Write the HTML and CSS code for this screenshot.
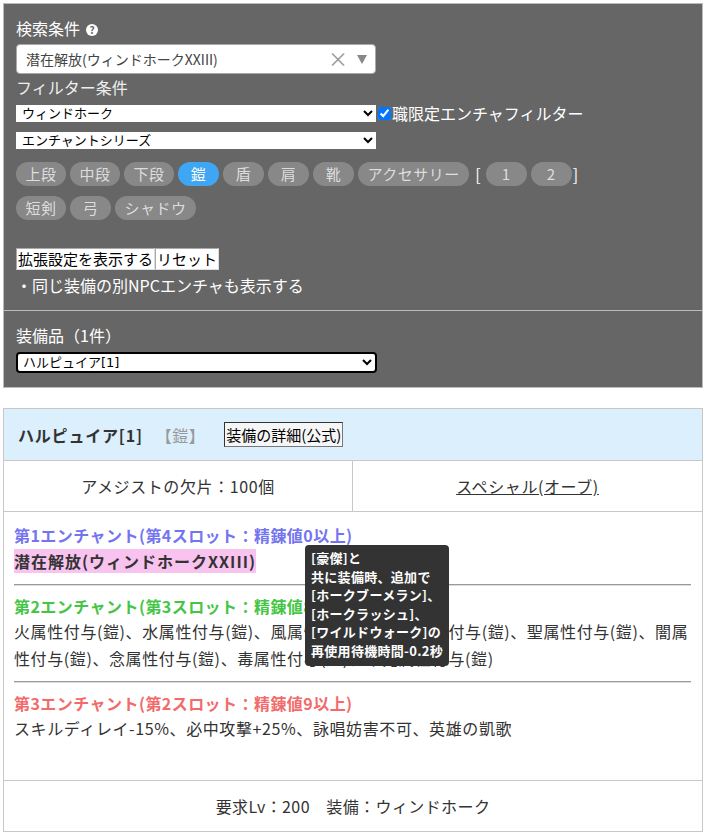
FILE: index.html
```html
<!DOCTYPE html>
<html lang="ja">
<head>
    <meta charset="UTF-8">
    <meta name="viewport" content="width=device-width, initial-scale=1.0">
    <title>エンチャント検索</title>
    <link rel="stylesheet" href="styles.css">
</head>
<body>

<div class="page">

    <!-- Search conditions -->
    <section class="search-panel">
        <div class="search-top">
            <div class="panel-title">検索条件 <span class="help-icon">?</span></div>

            <div class="combo">
                <span class="combo-value">潜在解放(ウィンドホークXXIII)</span>
                <span class="combo-clear">×</span>
                <span class="combo-arrow"></span>
            </div>

            <div class="panel-title panel-title-sub">フィルター条件</div>

            <div class="filter-row">
                <select class="filter-select">
                    <option>ウィンドホーク</option>
                </select>
                <label class="job-filter"><input type="checkbox" checked>職限定エンチャフィルター</label>
            </div>

            <div class="filter-row filter-row-2">
                <select class="filter-select">
                    <option>エンチャントシリーズ</option>
                </select>
            </div>

            <div class="tag-row">
                <span class="tag">上段</span>
                <span class="tag">中段</span>
                <span class="tag">下段</span>
                <span class="tag tag-active">鎧</span>
                <span class="tag">盾</span>
                <span class="tag">肩</span>
                <span class="tag">靴</span>
                <span class="tag">アクセサリー</span>
                <span class="tag-bracket">[</span>
                <span class="tag">1</span>
                <span class="tag">2</span>
                <span class="tag-bracket tag-bracket-end">]</span>
            </div>
            <div class="tag-row">
                <span class="tag">短剣</span>
                <span class="tag">弓</span>
                <span class="tag">シャドウ</span>
            </div>

            <div class="action-row">
                <button class="plain-btn">拡張設定を表示する</button><button class="plain-btn">リセット</button>
            </div>
            <div class="option-line">・同じ装備の別NPCエンチャも表示する</div>
        </div>

        <div class="search-bottom">
            <div class="panel-title">装備品（1件）</div>
            <select class="equip-select">
                <option>ハルピュイア[1]</option>
            </select>
        </div>
    </section>

    <!-- Equipment card -->
    <section class="equip-card">
        <header class="card-head">
            <span class="equip-name">ハルピュイア[1]</span>
            <span class="equip-type">【鎧】</span>
            <button class="detail-btn">装備の詳細(公式)</button>
        </header>

        <div class="card-info">
            <div class="info-cell">アメジストの欠片：100個</div>
            <div class="info-cell"><a href="#">スペシャル(オーブ)</a></div>
        </div>

        <div class="card-body">
            <div class="slot-title slot-1">第1エンチャント(第4スロット：精錬値0以上)</div>
            <div class="slot-effect"><span class="effect-hit">潜在解放(ウィンドホークXXIII)</span></div>

            <hr class="slot-rule">

            <div class="slot-title slot-2">第2エンチャント(第3スロット：精錬値8以上)</div>
            <div class="slot-effect">火属性付与(鎧)、水属性付与(鎧)、風属性付与(鎧)、地属性付与(鎧)、聖属性付与(鎧)、闇属性付与(鎧)、念属性付与(鎧)、毒属性付与(鎧)、不死属性付与(鎧)</div>

            <hr class="slot-rule">

            <div class="slot-title slot-3">第3エンチャント(第2スロット：精錬値9以上)</div>
            <div class="slot-effect">スキルディレイ-15%、必中攻撃+25%、詠唱妨害不可、英雄の凱歌</div>

            <!-- hover text for 潜在解放 -->
            <div class="tooltip">[豪傑]と<br>共に装備時、追加で<br>[ホークブーメラン]、<br>[ホークラッシュ]、<br>[ワイルドウォーク]の<br>再使用待機時間-0.2秒</div>
        </div>

        <footer class="card-foot">要求Lv：200　装備：ウィンドホーク</footer>
    </section>

</div>

</body>
</html>
```

FILE: styles.css
```css
/* Reset */
* {
    box-sizing: border-box;
}

body {
    margin: 0;
    font-family: "Noto Sans CJK JP", "Noto Sans", sans-serif;
    color: #333;
    background-color: #fff;
}

.page {
    padding: 3px 1px 20px 3px;
}

/* ---------- Search panel ---------- */
.search-panel {
    background-color: #666;
    border: 1px solid #bbb;
    color: #fff;
}

.search-top {
    padding: 12px 12px 13px 12px;
}

.panel-title {
    font-size: 16px;
    line-height: 24px;
    display: flex;
    align-items: center;
}

.panel-title-sub {
    margin-top: 1px;
    color: #eee;
}

.help-icon {
    display: inline-flex;
    justify-content: center;
    align-items: center;
    width: 12px;
    height: 12px;
    margin: 4px 0 0 6px;
    border-radius: 50%;
    background-color: #fff;
    color: #666;
    font-size: 10px;
    font-weight: bold;
    line-height: 1;
}

/* Select2-like combo box */
.combo {
    margin-top: 4px;
    width: 360px;
    height: 30px;
    display: flex;
    align-items: center;
    padding: 0 8px 0 9px;
    background-color: #fff;
    border: 1px solid #aaa;
    border-radius: 4px;
    color: #444;
    font-size: 14px;
}

.combo-value {
    flex: 1;
}

.combo-clear {
    color: #999;
    font-size: 20px;
    line-height: 1;
    margin-right: 9px;
}

.combo-arrow {
    width: 0;
    height: 0;
    border-left: 5px solid transparent;
    border-right: 5px solid transparent;
    border-top: 9px solid #888;
}

/* Filter selects */
.filter-row {
    margin-top: 2px;
    height: 24px;
    display: flex;
    align-items: center;
}

.filter-row-2 {
    margin-top: 3px;
}

.filter-select,
.equip-select {
    /* DejaVu keeps the line box short enough for the 17px tall box */
    font-family: "DejaVu Sans", "Noto Sans CJK JP", sans-serif;
    font-size: 13px;
    line-height: 15px;
    color: #000;
    background-color: #fff;
}

.filter-select {
    width: 360px;
    height: 17px;
    padding: 0 2px;
    border: none;
    border-radius: 0;
}

.job-filter {
    display: flex;
    align-items: center;
    font-size: 16px;
    line-height: 24px;
}

.job-filter input {
    margin: 0 1px 0 2px;
    width: 13px;
    height: 13px;
}

/* Equipment slot tags */
.tag-row {
    margin-top: 10px;
    display: flex;
    align-items: center;
    gap: 4px;
}

.tag {
    height: 24px;
    min-width: 41px;
    padding: 0 9.5px;
    border-radius: 12px;
    background-color: #888;
    color: #ddd;
    font-size: 15px;
    line-height: 24px;
    letter-spacing: 0.5px;
    text-align: center;
}

.tag-active {
    background-color: #3fa6f3;
    color: #fff;
}

.tag-bracket {
    color: #fff;
    font-size: 16px;
    margin: 0 1px 0 2px;
}

.tag-bracket-end {
    margin-left: -3px;
}

/* Buttons */
.action-row {
    margin-top: 28px;
    display: flex;
}

.plain-btn {
    height: 22px;
    padding: 0 1px;
    border: 1px solid #aaa;
    border-right-color: #ddd;
    border-bottom-color: #ddd;
    background-color: #fff;
    color: #000;
    font-family: inherit;
    font-size: 15px;
    line-height: 20px;
}

.option-line {
    margin-top: 3px;
    font-size: 16px;
    line-height: 24px;
}

.search-bottom {
    border-top: 1px solid #bbb;
    padding: 12px 12px 14px 12px;
}

.equip-select {
    display: block;
    margin-top: 5px;
    width: 361px;
    height: 21px;
    padding: 0 1px;
    border: 2px solid #000;
    border-radius: 4px;
}

/* ---------- Equipment card ---------- */
.equip-card {
    margin-top: 20px;
    border: 1px solid #c8c8c8;
}

.card-head {
    height: 52px;
    display: flex;
    align-items: center;
    padding: 0 14px;
    background-color: #dbeffc;
    border-bottom: 1px solid #c8c8c8;
}

.equip-name {
    font-size: 16px;
    font-weight: bold;
    letter-spacing: 0.8px;
    color: #333;
}

.equip-type {
    margin-left: 13px;
    color: #999;
    font-size: 16px;
    letter-spacing: 0.5px;
}

.detail-btn {
    margin-left: 19px;
    height: 25px;
    padding: 0 1px;
    border: 1px solid #333;
    border-right-color: #777;
    border-bottom-color: #777;
    background-color: #f6f6f6;
    color: #000;
    font-family: inherit;
    font-size: 15px;
    line-height: 22px;
}

.card-info {
    display: grid;
    grid-template-columns: 348px 1fr;
    border-bottom: 1px solid #c8c8c8;
}

.info-cell {
    height: 50px;
    display: flex;
    justify-content: center;
    align-items: center;
    font-size: 16px;
    letter-spacing: 0.6px;
    color: #333;
}

.info-cell + .info-cell {
    border-left: 1px solid #c8c8c8;
}

.info-cell a {
    color: #333;
}

.card-body {
    position: relative;
    padding: 11px 11px 38px 10px;
    border-bottom: 1px solid #c8c8c8;
}

.slot-title {
    font-size: 16px;
    font-weight: bold;
    line-height: 24px;
    letter-spacing: 0.45px;
}

.slot-1 {
    color: #7474f0;
}

.slot-2 {
    color: #45c545;
}

.slot-3 {
    color: #f26a6a;
}

.slot-effect {
    font-size: 16px;
    line-height: 27px;
    letter-spacing: 0.6px;
    color: #333;
}

.effect-hit {
    display: inline-block;
    margin-top: 2px;
    line-height: 24px;
    font-weight: bold;
    letter-spacing: 1px;
    background-color: #f8c3ee;
}

.slot-rule {
    margin: 9px 0 8px 0;
    border: none;
    border-top: 1px solid #999;
    border-bottom: 1px solid #ddd;
}

/* Tooltip floating over the slot list */
.tooltip {
    position: absolute;
    left: 301px;
    top: 33px;
    padding: 4px 6px 6px 6px;
    border-radius: 4px;
    background-color: #333;
    color: #fff;
    font-size: 13px;
    font-weight: bold;
    line-height: 18.5px;
    letter-spacing: 0.3px;
    white-space: nowrap;
}

.card-foot {
    height: 50px;
    display: flex;
    justify-content: center;
    align-items: center;
    font-size: 16px;
    letter-spacing: 0.4px;
    color: #333;
}
```
